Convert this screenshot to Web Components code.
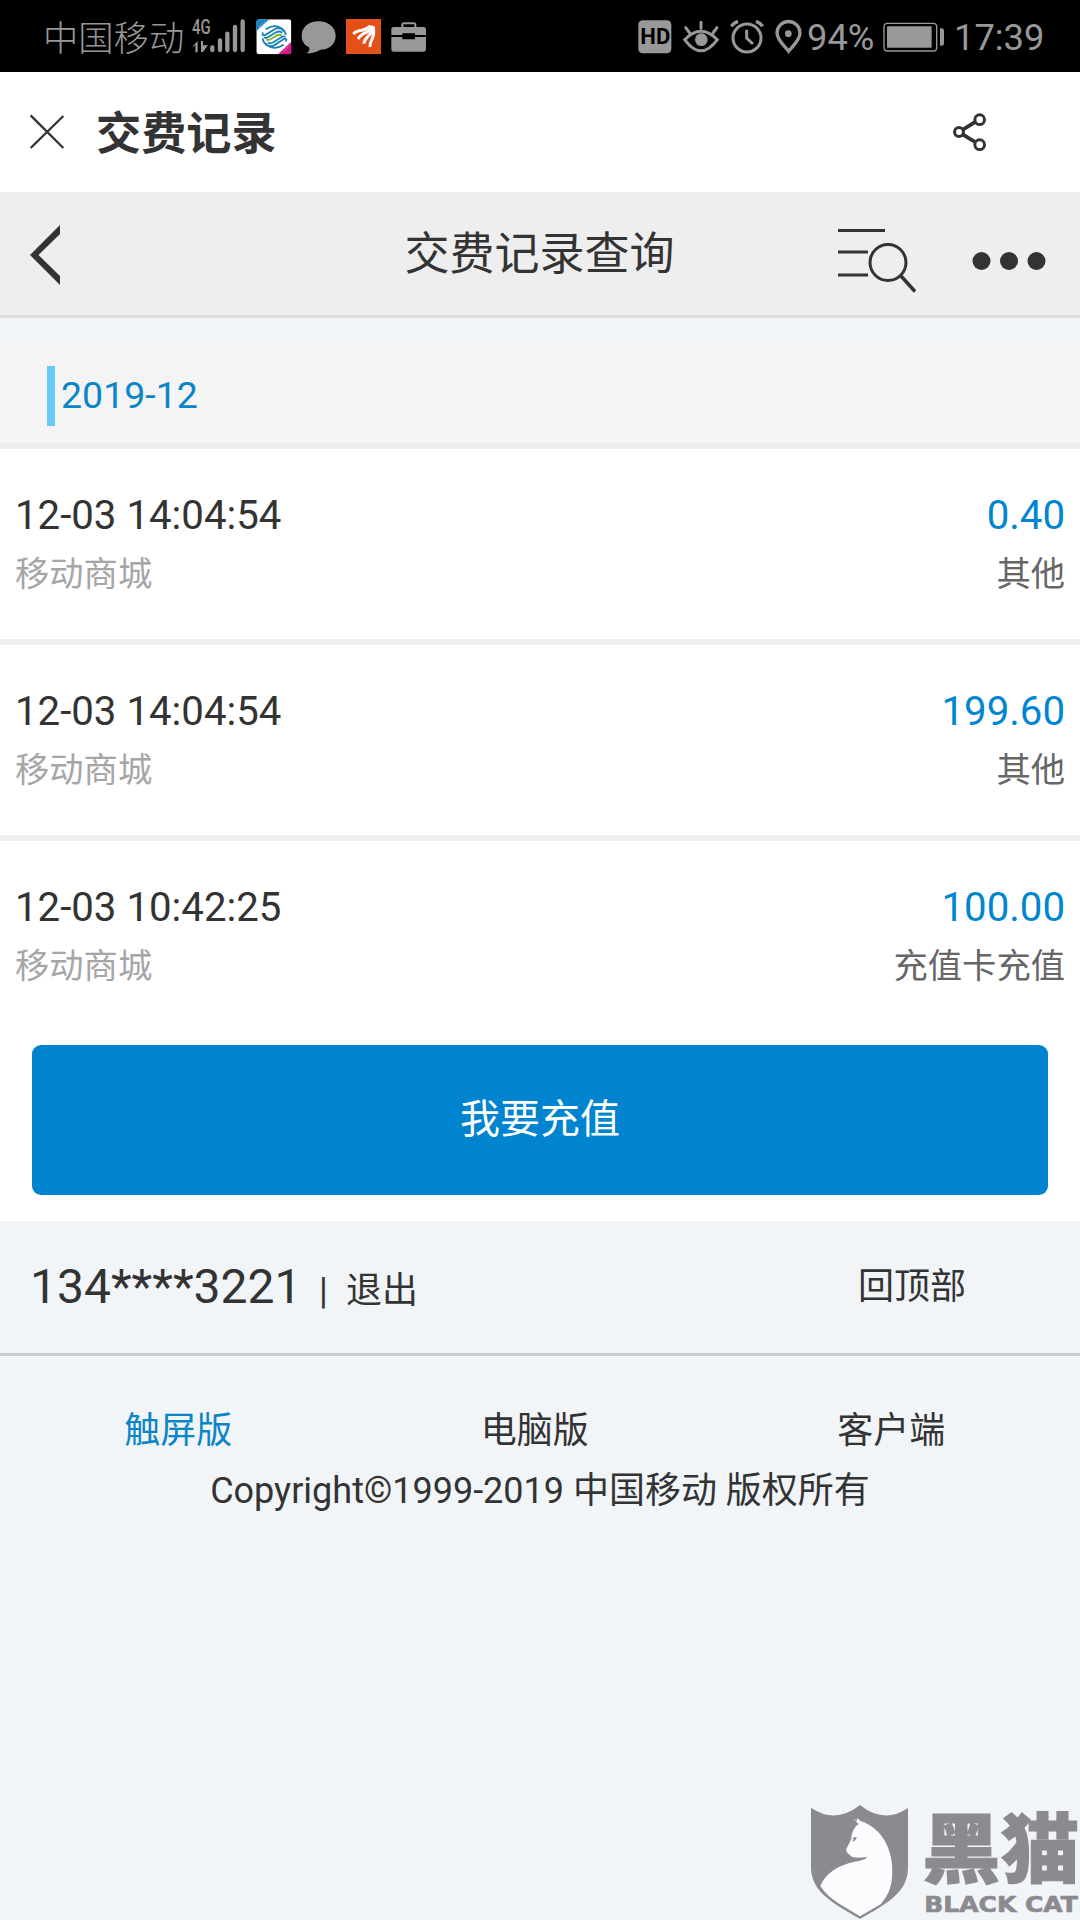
<!DOCTYPE html>
<html lang="zh-CN">
<head>
<meta charset="utf-8">
<title>交费记录</title>
<style>
html, body { margin: 0; }
body { width: 1080px; height: 1920px; overflow: hidden; background: #f1f5f8; }
</style>
</head>
<body>
<payment-page></payment-page>
<script>
const define = (name, html) => {
  const t = document.createElement('template');
  t.innerHTML = html;
  customElements.define(name, class extends HTMLElement {
    constructor() {
      super();
      this.attachShadow({ mode: 'open' }).append(t.content.cloneNode(true));
    }
  });
};

// Each icon: pixel width, pixel height, viewBox, markup.
const ICONS = {
  signal: [56, 36, '573 54 168 108', `
    <text x="576" y="101" font-family="Roboto" font-weight="500" font-size="60" textLength="56" lengthAdjust="spacingAndGlyphs" fill="#989898">4G</text>
    <path d="M578 139l15-16v34h-7v-23l-8 8zM603 123h6v13h15l-15 20h-6z" fill="#989898"/>
    <path d="M637 142v8M660 121v29M682 101v49M705 81v69M728 64v86" stroke="#989898" stroke-width="13" stroke-linecap="round"/>`],
  mobile: [36, 36, '767 56 108 108', `
    <clipPath id="c"><rect x="768" y="57" width="105" height="105" rx="9"/></clipPath>
    <g clip-path="url(#c)"><path d="M768 57h105v105H768z" fill="#fff"/>
    <path d="M768 57h39l-39 35z" fill="#1687c5"/><path d="M873 124v38h-40z" fill="#d8188a"/>
    <path d="M776 80l18-17M850 153l17-16" stroke="#fff" stroke-width="3" stroke-dasharray="3 4" opacity=".7"/>
    <g fill="none" stroke-width="5.500">
    <path d="M796 87q25-17 46-4 14 9 14 21M788 96q-5 14 10 6l26-16q18-8 26 7" stroke="#1b82bd"/>
    <path d="M850 133q-25 17-46 4-16-9-17-23M857 124q5-14-10-6l-26 17q-17 8-25-6" stroke="#1b82bd"/>
    <path d="M792 110q2 6 12 0l23-14q13-6 18 2" stroke="#1b82bd"/>
    <path d="M855 111q-2-6-12 0l-24 15q-10 6-16 0" stroke="#1b82bd"/>
    <path d="M798 117q6 4 14-1l17-11q8-4 16 1" stroke="#7fba2c" stroke-width="6"/></g></g>`],
  bubble: [36, 36, '904 56 108 108', `
    <path d="M957 63c30 0 51 19 51 43 0 26-20 41-46 42-13 8-26 11-41 11 8-7 10-11 7-18-15-8-22-19-22-35 0-25 21-43 51-43z" fill="#989898"/>`],
  news: [35, 35, '1038 57 105 105', `
    <path d="M1038 57h105v105h-105z" fill="#e45018"/>
    <g fill="none" stroke="#fff" stroke-width="9">
    <path d="M1060 102q8-9 26-11 16-3 25-14"/>
    <path d="M1074 117q8-14 25-20 14-7 17-20"/>
    <path d="M1091 131q3-13 15-24 14-13 13-29"/>
    <path d="M1110 141q-1-10 6-23 8-17 4-36"/></g>`],
  bag: [36, 36, '1173 56 108 108', `
    <path d="M1207 81v-7q0-5 5-5h29q5 0 5 5v7" fill="none" stroke="#989898" stroke-width="6"/>
    <path d="M1182 80h89q7 0 7 7v17h-33v-5h-38v5h-33v-17q0-7 8-7zM1174 110h33v7h38v-7h33v36q0 8-8 8h-88q-8 0-8-8z" fill="#989898"/>`],
  hd: [34, 34, '53 59 102 102', `
    <rect x="54" y="60" width="99" height="99" rx="13" fill="#989898"/>
    <text x="60" y="132" font-family="Roboto" font-weight="700" font-size="64" textLength="90" lengthAdjust="spacingAndGlyphs" fill="#000">HD</text>`],
  eye: [36, 34, '188 60 108 102', `
    <g fill="none" stroke="#989898" stroke-width="9" stroke-linecap="round">
    <path d="M193 119q49-51 98 0-49 67-98 0zM242 67v18M196 83l12 16M290 83l-12 16"/></g>
    <circle cx="243" cy="119" r="19" fill="#989898"/>`],
  alarm: [34, 36, '332 56 102 108', `
    <g fill="none" stroke="#989898" stroke-width="9"><circle cx="383" cy="113" r="42"/>
    <path d="M336 78q7-11 20-15M430 78q-7-11-20-15" stroke-width="10"/><path d="M382 88v25l19 18"/></g>`],
  pin: [27, 35, '467 57 81 105', `
    <path d="M508 154c-12-16-35-34-35-55a34 34 0 0 1 69 0c0 21-22 39-34 55z" fill="none" stroke="#989898" stroke-width="10"/>
    <circle cx="507" cy="101" r="10" fill="#989898"/>`],
  battery: [62, 30, '790 65 186 90', `
    <rect x="793" y="69" width="158" height="83" rx="10" fill="none" stroke="#989898" stroke-width="4"/>
    <rect x="802" y="78" width="134" height="64" rx="2" fill="#989898"/>
    <path d="M961 84h4q8 0 8 8v36q0 8-8 8h-4z" fill="#989898"/>`],
  close: [36, 36, '88 341 108 108', `
    <path d="M93 345l98 98M191 347l-98 96" stroke="#333" stroke-width="7"/>`],
  share: [36, 40, '996 336 108 120', `
    <g fill="none" stroke="#333" stroke-width="9"><path d="M1029 389l38-24M1029 404l38 23" stroke-width="11"/>
    <circle cx="1017" cy="396" r="13.500"/><circle cx="1079" cy="359" r="14.500"/><circle cx="1079" cy="434" r="14.500"/></g>`],
  back: [30, 62, '0 0 30 62', `<path d="M30 1v9L8.500 31 30 52v9L0 31z" fill="#333"/>`],
  query: [80, 68, '0 0 80 68', `
    <g fill="none" stroke="#333" stroke-width="3"><path d="M1 3.500h47M1 25h30M1 48h30"/>
    <circle cx="51" cy="35.500" r="18"/><path d="M64 49l14 15.500" stroke-width="3.500"/></g>`],
  dots: [74, 20, '0 0 74 20', `<g fill="#333"><circle cx="9.500" cy="10" r="9"/><circle cx="37" cy="10" r="9"/><circle cx="64.500" cy="10" r="9"/></g>`]
};
customElements.define('ui-icon', class extends HTMLElement {
  constructor() { super(); this.attachShadow({ mode: 'open' }); }
  connectedCallback() {
    const [w, h, vb, body] = ICONS[this.getAttribute('name')];
    this.shadowRoot.innerHTML = `<style>:host{display:block;flex:none}svg{display:block;overflow:visible}</style>
      <svg width="${w}" height="${h}" viewBox="${vb}" preserveAspectRatio="none">${body}</svg>`;
  }
});

define('status-bar', `
<style>
:host { display: flex; justify-content: space-between; box-sizing: border-box; height: 72px; padding: 0 38px 0 43px; background: #000; color: #989898; font-size: 36.300px; line-height: 72px; }
.g { display: flex; align-items: flex-start; }
ui-icon { margin-top: 19px; }
.carrier { font-size: 35.300px; font-weight: 300; width: 148px; line-height: 78px; white-space: nowrap; }
.t { line-height: 75px; white-space: nowrap; }
</style>
<div class="g">
  <span class="carrier">中国移动</span>
  <ui-icon name="signal" style="margin-top:18px"></ui-icon>
  <ui-icon name="mobile" style="margin-left:9px"></ui-icon>
  <ui-icon name="bubble" style="margin-left:9px"></ui-icon>
  <ui-icon name="news" style="margin-left:9px"></ui-icon>
  <ui-icon name="bag" style="margin-left:10px"></ui-icon>
</div>
<div class="g">
  <ui-icon name="hd" style="margin-top:20px"></ui-icon>
  <ui-icon name="eye" style="margin:20px 0 0 11px"></ui-icon>
  <ui-icon name="alarm" style="margin-left:11px"></ui-icon>
  <ui-icon name="pin" style="margin-left:11px"></ui-icon>
  <span class="t" style="width:76px;margin-left:5px">94%</span>
  <ui-icon name="battery" style="margin:22px 0 0 0"></ui-icon>
  <span class="t" style="width:88px;margin-left:9px">17:39</span>
</div>`);

define('app-bar', `
<style>
:host { display: flex; align-items: center; box-sizing: border-box; height: 120px; padding: 0 92px 0 29px; background: #fff; }
.t { margin-left: 31px; flex: 1; font-size: 45.200px; font-weight: 700; line-height: 114px; padding-top: 6px; }
</style>
<ui-icon name="close"></ui-icon><div class="t"><slot></slot></div><ui-icon name="share"></ui-icon>`);

define('nav-bar', `
<style>
:host { display: grid; grid-template-columns: 1fr auto 1fr; box-sizing: border-box; height: 126px; padding: 0 32px 0 30px; background: #eee; border-bottom: 3px solid #ddd; }
.back { padding-top: 32px; }
.t { font-size: 45px; line-height: 122px; padding: 2px 0 0 1px; height: 120px; }
.r { display: flex; justify-content: flex-end; align-items: flex-start; padding-right: 2px; }
</style>
<div class="back"><ui-icon name="back"></ui-icon></div>
<div class="t"><slot></slot></div>
<div class="r"><ui-icon name="query" style="margin:35px 55px 0 0"></ui-icon><ui-icon name="dots" style="margin-top:59px"></ui-icon></div>`);

define('month-head', `
<style>
:host { display: block; box-sizing: border-box; height: 106px; padding: 23px 0 0 47px; margin-top: 25px; background: #f4f4f4; border-bottom: 6px solid #ededed; }
div { border-left: 8px solid #67cbf7; padding-left: 6px; font-size: 37.500px; line-height: 58px; height: 60px; color: #0c85c8; }
</style>
<div><slot></slot></div>`);

define('pay-record', `
<style>
:host { display: flex; justify-content: space-between; height: 190px; box-sizing: border-box; padding: 38px 15px 0; background: #fff; font-size: 34.300px; line-height: 58px; }
:host([divided]) { height: 196px; border-bottom: 6px solid #ededed; }
.r { text-align: right; color: #666; }
.big { font-size: 40.200px; }
.money { color: #0085d0; }
.src { color: #a6a6a6; }
</style>
<div><div class="big"><slot name="time"></slot></div><div class="src"><slot name="source"></slot></div></div>
<div class="r"><div class="big money"><slot name="amount"></slot></div><div><slot name="kind"></slot></div></div>`);

define('recharge-button', `
<style>
:host { display: block; background: #fff; padding: 14px 32px 26px; }
button { display: block; width: 100%; height: 150px; border: 0; padding: 0 0 9px; border-radius: 9px; background: #0084cf; color: #fff; font: inherit; font-size: 40px; }
</style>
<button><slot></slot></button>`);

define('account-bar', `
<style>
:host { display: flex; justify-content: space-between; box-sizing: border-box; height: 135px; padding: 0 114px 0 30px; border-bottom: 3px solid #c9cbcd; font-size: 36px; }
.l { display: flex; align-items: baseline; line-height: 132px; }
.phone { font-size: 48px; width: 289px; }
.bar { font-size: 36px; width: 27px; }
.top { line-height: 133px; }
</style>
<div class="l"><span class="phone"><slot name="phone"></slot></span><span class="bar">|</span><span><slot name="logout"></slot></span></div>
<div class="top"><slot name="top"></slot></div>`);

define('site-footer', `
<style>
:host { display: block; padding-top: 45px; font-size: 36px; line-height: 60px; text-align: center; }
.links { display: grid; grid-template-columns: repeat(3, 356.500px); }
.on { color: #0c85c8; }
</style>
<div class="links"><span class="on">触屏版</span><span>电脑版</span><span>客户端</span></div>
<div>Copyright©1999-2019 中国移动 版权所有</div>`);

define('blackcat-mark', `
<style>
:host { position: absolute; right: 0; bottom: 0; display: block; }
svg { display: block; }
</style>
<svg width="290" height="140" viewBox="0 0 870 420">
  <path d="M63 83q73 50 147-8 72 58 144 9v178c0 76-61 107-144 155C127 369 63 335 63 262z" fill="#8b8b8f"/>
  <path d="M188 114l12 9 2-9 10 9c68 22 97 91 95 156-2 48-15 70-35 94l-62 36c-51-32-91-49-119-91 23-53 81-69 112-74 17-4 24-7 29-12-18-1-31 5-49-3-4-7-11-8-14-16-3-8 13-23 15-41 3-19 11-34 22-40z" fill="#fbfcfe"/>
  <path d="M181 181q8-10 19-10-2 14-15 14 9-4 4-10z" fill="#8b8b8f"/>
  <g fill="#8b8b8f" stroke="#8b8b8f">
    <text x="396" y="291" font-family="'Noto Sans CJK SC'" font-weight="900" font-size="230" textLength="472" lengthAdjust="spacingAndGlyphs" stroke-width="3">黑猫</text>
    <text x="403" y="396" font-family="'DejaVu Sans'" font-weight="700" font-size="65" textLength="460" lengthAdjust="spacingAndGlyphs" stroke-width="2">BLACK CAT</text>
  </g>
</svg>`);

define('payment-page', `
<style>
:host { display: block; position: relative; width: 1080px; height: 1920px; overflow: hidden; background: #f1f5f8; color: #333; font-family: Roboto, "Noto Sans CJK SC", sans-serif; }
</style>
<status-bar></status-bar>
<app-bar>交费记录</app-bar>
<nav-bar>交费记录查询</nav-bar>
<month-head>2019-12</month-head>
<pay-record divided><span slot="time">12-03 14:04:54</span><span slot="source">移动商城</span><span slot="amount">0.40</span><span slot="kind">其他</span></pay-record>
<pay-record divided><span slot="time">12-03 14:04:54</span><span slot="source">移动商城</span><span slot="amount">199.60</span><span slot="kind">其他</span></pay-record>
<pay-record><span slot="time">12-03 10:42:25</span><span slot="source">移动商城</span><span slot="amount">100.00</span><span slot="kind">充值卡充值</span></pay-record>
<recharge-button>我要充值</recharge-button>
<account-bar><span slot="phone">134****3221</span><span slot="logout">退出</span><span slot="top">回顶部</span></account-bar>
<site-footer></site-footer>
<blackcat-mark></blackcat-mark>`);
</script>
</body>
</html>
